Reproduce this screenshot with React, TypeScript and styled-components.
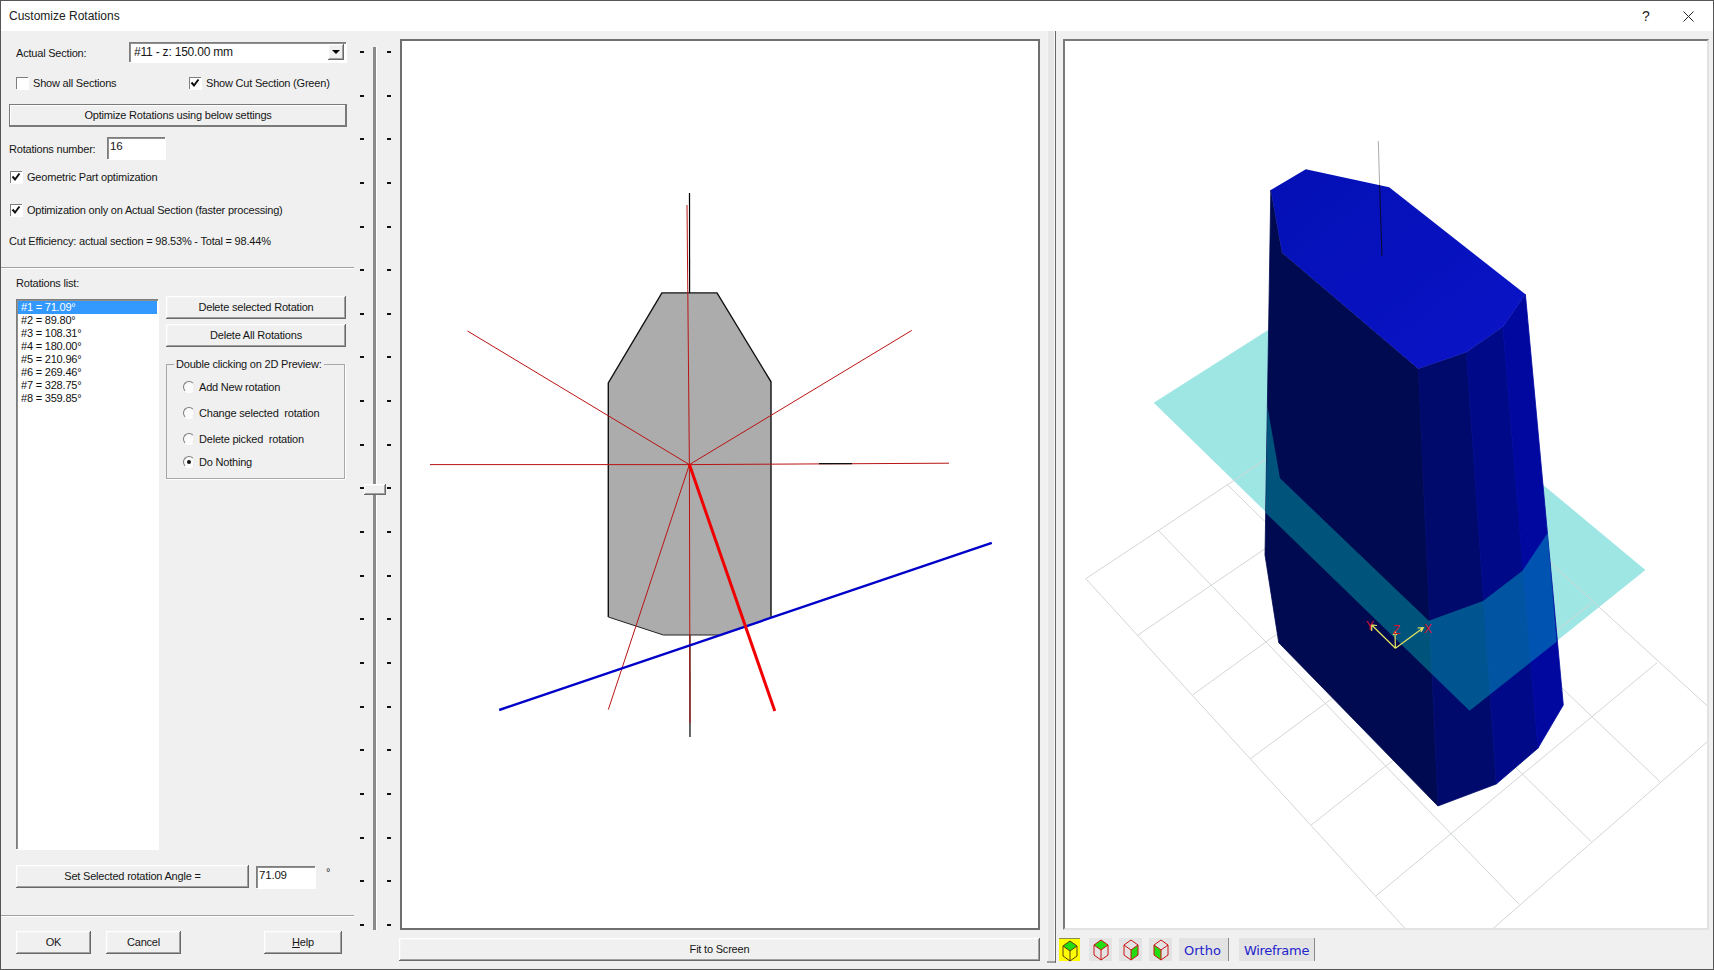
import React from "react";
import styled, { createGlobalStyle, css } from "styled-components";

const Global = createGlobalStyle`
  html, body { margin: 0; padding: 0; background: #f0f0f0; }
  #root { width: 1714px; height: 970px; overflow: hidden; }
`;

const raised = css`
  background: #f0f0f0;
  box-shadow: inset -1px -1px 0 #696969, inset 1px 1px 0 #ffffff, inset -2px -2px 0 #a0a0a0, inset 2px 2px 0 #f4f4f4;
`;
const sunken = css`
  background: #ffffff;
  box-shadow: inset 1px 1px 0 #7d7d7d, inset 2px 2px 0 #8f8f8f, 1px 1px 0 #ffffff;
`;

const Window = styled.div`
  width: 1714px;
  height: 970px;
  box-sizing: border-box;
  border: 1px solid #555555;
  display: flex;
  flex-direction: column;
  background: #f0f0f0;
  color: #161616;
  font-family: "Liberation Sans", Arial, sans-serif;
  font-size: 11px;
  letter-spacing: -0.2px;
`;
const TitleBar = styled.div`
  height: 30px;
  flex: none;
  background: #ffffff;
  display: flex;
  align-items: center;
  padding-left: 8px;
  font-size: 12px;
  letter-spacing: 0;
  color: #202020;
`;
const TitleText = styled.span`
  flex: 1;
`;
const HelpGlyph = styled.span`
  width: 14px;
  margin-right: 30px;
  text-align: center;
  font-size: 14px;
  color: #222;
`;
const CloseGlyph = styled.svg`
  width: 11px;
  height: 11px;
  margin-right: 19px;
`;
const Body = styled.div`
  flex: 1;
  display: flex;
  min-height: 0;
`;
const LeftPanel = styled.div`
  width: 354px;
  flex: none;
  display: flex;
  flex-direction: column;
`;
const Row = styled.div<{ $top: number; $left?: number; $h?: number }>`
  display: flex;
  align-items: center;
  flex: none;
  margin-top: ${(p) => p.$top}px;
  margin-left: ${(p) => p.$left ?? 0}px;
  height: ${(p) => (p.$h ? `${p.$h}px` : "auto")};
`;
const FieldLabel = styled.span<{ $w: number }>`
  width: ${(p) => p.$w}px;
  flex: none;
  white-space: nowrap;
  padding-top: 2px;
`;
const Plain = styled.span`
  white-space: nowrap;
`;
const Combo = styled.div`
  ${sunken};
  width: 217px;
  height: 20px;
  box-sizing: border-box;
  padding-left: 5px;
  display: flex;
  align-items: center;
  justify-content: space-between;
  font-size: 12px;
`;
const ComboButton = styled.div`
  ${raised};
  width: 16px;
  height: 16px;
  margin-right: 2px;
  display: flex;
  align-items: center;
  justify-content: center;
`;
const ComboArrow = styled.div`
  width: 0;
  height: 0;
  border-left: 4px solid transparent;
  border-right: 4px solid transparent;
  border-top: 4px solid #000;
`;
const CheckWrap = styled.div<{ $w?: number }>`
  display: flex;
  align-items: center;
  gap: 5px;
  height: 14px;
  flex: none;
  width: ${(p) => (p.$w ? `${p.$w}px` : "auto")};
  white-space: nowrap;
`;
const Box = styled.div`
  ${sunken};
  box-shadow: inset 1px 1px 0 #7d7d7d, 1px 1px 0 #ffffff;
  width: 12px;
  height: 12px;
  flex: none;
  display: flex;
  align-items: center;
  justify-content: center;
`;
const Button = styled.div<{ $w: number; $primary?: boolean; $ml?: number }>`
  ${raised};
  ${(p) =>
    p.$primary &&
    css`
      box-shadow: inset 0 0 0 1px #7a7a7a, inset -2px -2px 0 #7a7a7a, inset 2px 2px 0 #ffffff;
    `}
  width: ${(p) => p.$w}px;
  margin-left: ${(p) => p.$ml ?? 0}px;
  height: 23px;
  flex: none;
  box-sizing: border-box;
  display: flex;
  align-items: center;
  justify-content: center;
  white-space: nowrap;
  padding-bottom: 1px;
`;
const Underlined = styled.span`
  text-decoration: underline;
`;
const NumberBox = styled.div<{ $w: number; $ml?: number }>`
  ${sunken};
  width: ${(p) => p.$w}px;
  margin-left: ${(p) => p.$ml ?? 0}px;
  height: 22px;
  flex: none;
  box-sizing: border-box;
  padding: 3px 0 0 3px;
  font-size: 11.5px;
  line-height: 13px;
`;
const Separator = styled.div<{ $top: number }>`
  height: 1px;
  flex: none;
  margin: ${(p) => p.$top}px 1px 0 0;
  background: #a0a0a0;
  border-bottom: 1px solid #ffffff;
`;
const MainRow = styled.div`
  display: flex;
  flex: none;
  margin: 6px 0 0 15px;
  height: 553px;
`;
const ListBox = styled.div`
  ${sunken};
  width: 142px;
  height: 550px;
  margin-top: 3px;
  box-sizing: border-box;
  padding: 2px 1px 0 2px;
  flex: none;
`;
const ListRow = styled.div<{ $selected?: boolean }>`
  height: 13px;
  line-height: 13px;
  padding-left: 3px;
  font-size: 11px;
  background: ${(p) => (p.$selected ? "#3399ff" : "transparent")};
  color: ${(p) => (p.$selected ? "#ffffff" : "#111111")};
`;
const SideColumn = styled.div`
  margin-left: 8px;
  width: 180px;
  display: flex;
  flex-direction: column;
  gap: 5px;
`;
const Group = styled.fieldset`
  margin: 12px 0 0;
  padding: 0 0 0 16px;
  width: 179px;
  height: 115px;
  box-sizing: border-box;
  border: 1px solid #a8a8a8;
  box-shadow: 1px 1px 0 #fff;
  position: relative;
`;
const GroupTitle = styled.div`
  position: absolute;
  top: -7px;
  left: 7px;
  padding: 0 2px;
  background: #f0f0f0;
  white-space: nowrap;
`;
const RadioRow = styled.div<{ $top: number }>`
  display: flex;
  align-items: center;
  gap: 4px;
  height: 14px;
  margin-top: ${(p) => p.$top}px;
  white-space: nowrap;
`;
const Radio = styled.div<{ $on?: boolean }>`
  width: 12px;
  height: 12px;
  flex: none;
  border-radius: 50%;
  background: #fbfbfb;
  box-sizing: border-box;
  border: 1px solid;
  border-color: #7a7a7a #e6e6e6 #ffffff #7a7a7a;
  display: flex;
  align-items: center;
  justify-content: center;
  &::after {
    content: "";
    display: ${(p) => (p.$on ? "block" : "none")};
    width: 4px;
    height: 4px;
    border-radius: 50%;
    background: #111;
  }
`;
const Degree = styled.span`
  margin: -9px 0 0 11px;
  font-size: 11px;
`;
const SliderColumn = styled.div`
  width: 44px;
  flex: none;
  position: relative;
  padding: 20px 0 0 5px;
  box-sizing: border-box;
`;
const Track = styled.div`
  position: absolute;
  left: 18px;
  top: 16px;
  width: 3px;
  height: 883px;
  background: #8a8a8a;
  box-shadow: 1px 0 0 #ffffff;
`;
const Thumb = styled.div`
  ${raised};
  position: absolute;
  left: 9px;
  top: 453px;
  width: 22px;
  height: 11px;
`;
const Ticks = styled.div`
  width: 31px;
  height: 875px;
  display: flex;
  flex-direction: column;
  justify-content: space-between;
`;
const Tick = styled.div`
  display: flex;
  justify-content: space-between;
`;
const Dash = styled.span`
  width: 4px;
  height: 2px;
  background: #111;
`;
const PreviewColumn = styled.div`
  width: 641px;
  flex: none;
  padding-top: 8px;
  display: flex;
  flex-direction: column;
`;
const Canvas2D = styled.div`
  margin-left: 1px;
  width: 640px;
  height: 891px;
  box-sizing: border-box;
  border: 2px solid #6f6f6f;
  background: #ffffff;
  flex: none;
`;
const Drawing = styled.svg`
  display: block;
  width: 100%;
  height: 100%;
`;
const Splitter = styled.div`
  margin-left: 7px;
  width: 9px;
  height: 932px;
  flex: none;
  box-sizing: border-box;
  background: #e6e6e6;
  border-right: 1px solid #696969;
  box-shadow: inset 0 -2px 0 #a0a0a0, inset -1px 0 0 #f4f4f4, inset 1px 0 0 #f4f4f4;
`;
const View3DColumn = styled.div`
  flex: 1;
  padding-top: 8px;
  display: flex;
  flex-direction: column;
`;
const Canvas3D = styled.div`
  margin-left: 7px;
  width: 646px;
  height: 891px;
  box-sizing: border-box;
  border-style: solid;
  border-width: 2px;
  border-color: #7a7a7a #e2e2e2 #e2e2e2 #7a7a7a;
  background: #ffffff;
  flex: none;
`;
const Toolbar = styled.div`
  margin: 8px 0 0 3px;
  height: 23px;
  display: flex;
  align-items: stretch;
`;
const ToolIcon = styled.div<{ $active?: boolean; $ml?: number }>`
  width: ${(p) => (p.$active ? 21 : 23)}px;
  margin-left: ${(p) => p.$ml ?? 0}px;
  background: ${(p) => (p.$active ? "#ffff00" : "#e3e3e3")};
  ${(p) => p.$active && "border-top: 1px solid #8a8a50; box-sizing: border-box;"}
  display: flex;
  justify-content: center;
`;
const ToolText = styled.div<{ $w: number; $ml: number; $tight?: boolean }>`
  width: ${(p) => p.$w}px;
  margin-left: ${(p) => p.$ml}px;
  box-sizing: border-box;
  background: #e3e3e3;
  border-right: 1px solid #8a8a8a;
  color: #2424cc;
  font-family: "DejaVu Sans", sans-serif;
  font-size: 13px;
  letter-spacing: ${(p) => (p.$tight ? "-0.3px" : "0")};
  display: flex;
  align-items: center;
  padding: 2px 0 0 5px;
`;

const Check = ({ on }: { on?: boolean }) => (
  <Box>
    {on && (
      <svg width="10" height="10" viewBox="0 0 10 10">
        <path d="M1.5 4.5 L4 7.5 L8.5 1.5" fill="none" stroke="#111" strokeWidth="2" />
      </svg>
    )}
  </Box>
);

const rotations = ["#1 = 71.09°", "#2 = 89.80°", "#3 = 108.31°", "#4 = 180.00°", "#5 = 210.96°", "#6 = 269.46°", "#7 = 328.75°", "#8 = 359.85°"];

const CX = 689.4;
const CY = 464.6;
const thinRays: [number, number][] = [
  [467.5, 331],
  [911.8, 330.4],
  [430, 464.6],
  [949, 463.2],
  [608.3, 709.6],
  [690, 723],
  [687, 205],
];

const Section2D = () => (
  <Drawing viewBox="402 41 636 887" preserveAspectRatio="none">
    <line x1="689.5" y1="193" x2="690" y2="737" stroke="#000" strokeWidth="1.2" />
    <polygon
      points="661.9,292.9 717,292.9 771,381.8 771,617.5 718.5,635 663.4,635 608.3,617 608.3,382.9"
      fill="#acacac"
    />
    <path d="M608.3 617 L608.3 382.9 L661.9 292.9 L717 292.9 L771 381.8 L771 617.5" fill="none" stroke="#111" strokeWidth="1.4" />
    <path d="M608.3 617 L663.4 635 L718.5 635" fill="none" stroke="#222" strokeWidth="1" />
    {thinRays.map(([x, y]) => (
      <line key={`${x}-${y}`} x1={CX} y1={CY} x2={x} y2={y} stroke="#b81414" strokeWidth="1" />
    ))}
    <line x1="819" y1="463.6" x2="852" y2="463.6" stroke="#111" strokeWidth="1.3" />
    <line x1="499.2" y1="710" x2="991.8" y2="542.9" stroke="#0000c8" strokeWidth="2.4" />
    <line x1={CX} y1={CY} x2="774.8" y2="711" stroke="#f00000" strokeWidth="3" />
  </Drawing>
);

// maps a point read in grid space to page pixels
const gx = (x: number) => 1060 + x / 2.4;
const gy = (y: number) => 500 + y / 3;
const gridLines: number[][] = [
  [62, 236, 600, -210],
  [187, 405, 700, -30],
  [318, 585, 700, 240],
  [458, 775, 800, 460],
  [603, 975, 1275, 310],
  [758, 1188, 1433, 488],
  [1037, 1288, 1560, 718],
  [62, 236, 830, 1288],
  [235, 90, 1102, 1213],
  [400, -48, 1275, 1025],
  [900, 200, 1440, 845],
  [1100, 100, 1560, 625],
];

const faces: [string, string][] = [
  ["1270.8,190 1282,252.7 1418.3,368.7 1437.9,806 1278.75,642.7 1265,555", "#000a50"],
  ["1418.3,368.7 1466.3,352.3 1496.25,784 1437.9,806", "#000a6c"],
  ["1466.3,352.3 1502.9,326.7 1537.9,748.3 1496.25,784", "#000a88"],
  ["1502.9,326.7 1525.4,294.3 1563.3,705 1537.9,748.3", "#0008a0"],
];

const Solid3D = () => (
  <Drawing viewBox="1065 41 642 887" preserveAspectRatio="none">
    <defs>
      <linearGradient id="topFace" x1="0" y1="0" x2="1" y2="1">
        <stop offset="0" stopColor="#0310b4" />
        <stop offset="1" stopColor="#0b14c8" />
      </linearGradient>
    </defs>
    <polygon points="1153.75,402.7 1318.6,298 1645.4,570 1469.6,710.7" fill="#9ee6e4" />
    {gridLines.map(([a, b, c, d]) => (
      <line key={`${a}-${b}-${c}`} x1={gx(a)} y1={gy(b)} x2={gx(c)} y2={gy(d)} stroke="#d2d6d6" strokeWidth="1" />
    ))}
    {faces.map(([points, fill]) => (
      <polygon key={fill} points={points} fill={fill} stroke={fill} strokeWidth="0.8" />
    ))}
    <polygon points="1270.8,190 1305.8,169.3 1389.2,187.3 1525.4,294.3 1502.9,326.7 1466.3,352.3 1418.3,368.7 1282,252.7" fill="url(#topFace)" />
    <polygon
      points="1267.5,406.7 1280,478.3 1428.75,620.7 1483,601 1522.5,570.7 1547.5,533.3 1556.7,641.7 1469.6,710.7 1265.8,513"
      fill="rgba(0,230,210,0.34)"
    />
    <line x1="1378.3" y1="141" x2="1379.6" y2="185" stroke="#aaaaaa" strokeWidth="1" />
    <line x1="1379.6" y1="185" x2="1382" y2="256" stroke="#0a0a30" strokeWidth="1" />
    <g stroke="#e6e660" strokeWidth="1.2" fill="none">
      <path d="M1395.4 648.3 L1371.7 625 M1371.7 631 L1371.7 625 L1377 625.5" />
      <path d="M1395.4 648.3 L1395 631.7 M1393 635 L1395 631.7 L1397 635" />
      <path d="M1395.4 648.3 L1423.3 627.7 M1417.5 628 L1423.3 627.7 L1421 632" />
    </g>
    <g fill="#d81030" fontFamily="'Liberation Sans', sans-serif" fontSize="12">
      <text x="1366" y="630">Y</text>
      <text x="1393" y="634">Z</text>
      <text x="1424" y="633">X</text>
    </g>
  </Drawing>
);

const Cube = ({ face, stroke }: { face: "top" | "right" | "left"; stroke: string }) => {
  const polys = {
    top: "8,1 15,6 8,11 1,6",
    right: "15,6 15,16 8,21 8,11",
    left: "1,6 1,16 8,21 8,11",
  };
  return (
    <svg width="16" height="23" viewBox="0 -1 16 23">
      <polygon points={polys[face]} fill="#22dd11" />
      <path d="M8 1 L15 6 L15 16 L8 21 L1 16 L1 6 Z M1 6 L8 11 L15 6 M8 11 L8 21" fill="none" stroke={stroke} strokeWidth="1" />
    </svg>
  );
};

export default function App() {
  return (
    <>
      <Global />
      <Window>
        <TitleBar>
          <TitleText>Customize Rotations</TitleText>
          <HelpGlyph>?</HelpGlyph>
          <CloseGlyph viewBox="0 0 11 11">
            <path d="M0.5 0.5 L10.5 10.5 M10.5 0.5 L0.5 10.5" stroke="#222" strokeWidth="1" />
          </CloseGlyph>
        </TitleBar>
        <Body>
          <LeftPanel>
            <Row $top={11} $left={15} $h={20}>
              <FieldLabel $w={113}>Actual Section:</FieldLabel>
              <Combo>
                #11 - z: 150.00 mm
                <ComboButton>
                  <ComboArrow />
                </ComboButton>
              </Combo>
            </Row>
            <Row $top={14} $left={15} $h={14}>
              <CheckWrap $w={173}>
                <Check />
                Show all Sections
              </CheckWrap>
              <CheckWrap>
                <Check on />
                Show Cut Section (Green)
              </CheckWrap>
            </Row>
            <Row $top={14} $left={8}>
              <Button $w={338} $primary>
                Optimize Rotations using below settings
              </Button>
            </Row>
            <Row $top={10} $left={8} $h={22}>
              <FieldLabel $w={98}>Rotations number:</FieldLabel>
              <NumberBox $w={58}>16</NumberBox>
            </Row>
            <Row $top={11} $left={9} $h={14}>
              <CheckWrap>
                <Check on />
                Geometric Part optimization
              </CheckWrap>
            </Row>
            <Row $top={19} $left={9} $h={14}>
              <CheckWrap>
                <Check on />
                Optimization only on Actual Section (faster processing)
              </CheckWrap>
            </Row>
            <Row $top={17} $left={8} $h={14}>
              <Plain>Cut Efficiency: actual section = 98.53% - Total = 98.44%</Plain>
            </Row>
            <Separator $top={19} />
            <Row $top={7} $left={15} $h={14}>
              <Plain>Rotations list:</Plain>
            </Row>
            <MainRow>
              <ListBox>
                {rotations.map((r, i) => (
                  <ListRow key={r} $selected={i === 0}>
                    {r}
                  </ListRow>
                ))}
              </ListBox>
              <SideColumn>
                <Button $w={180}>Delete selected Rotation</Button>
                <Button $w={180}>Delete All Rotations</Button>
                <Group>
                  <GroupTitle>Double clicking on 2D Preview:</GroupTitle>
                  <RadioRow $top={15}>
                    <Radio />
                    Add New rotation
                  </RadioRow>
                  <RadioRow $top={12}>
                    <Radio />
                    Change selected&nbsp; rotation
                  </RadioRow>
                  <RadioRow $top={12}>
                    <Radio />
                    Delete picked&nbsp; rotation
                  </RadioRow>
                  <RadioRow $top={9}>
                    <Radio $on />
                    Do Nothing
                  </RadioRow>
                </Group>
              </SideColumn>
            </MainRow>
            <Row $top={16} $left={15} $h={23}>
              <Button $w={233}>Set Selected rotation Angle =</Button>
              <NumberBox $w={59} $ml={7}>
                71.09
              </NumberBox>
              <Degree>°</Degree>
            </Row>
            <Separator $top={27} />
            <Row $top={14} $left={15} $h={23}>
              <Button $w={75}>OK</Button>
              <Button $w={75} $ml={15}>
                Cancel
              </Button>
              <Button $w={78} $ml={83}>
                <Underlined>H</Underlined>elp
              </Button>
            </Row>
          </LeftPanel>
          <SliderColumn>
            <Track />
            <Ticks>
              {Array.from({ length: 21 }, (_, i) => (
                <Tick key={i}>
                  <Dash />
                  <Dash />
                </Tick>
              ))}
            </Ticks>
            <Thumb />
          </SliderColumn>
          <PreviewColumn>
            <Canvas2D>
              <Section2D />
            </Canvas2D>
            <Row $top={8}>
              <Button $w={641}>Fit to Screen</Button>
            </Row>
          </PreviewColumn>
          <Splitter />
          <View3DColumn>
            <Canvas3D>
              <Solid3D />
            </Canvas3D>
            <Toolbar>
              <ToolIcon $active>
                <Cube face="top" stroke="#5a3a10" />
              </ToolIcon>
              <ToolIcon $ml={9}>
                <Cube face="top" stroke="#cc1010" />
              </ToolIcon>
              <ToolIcon $ml={7}>
                <Cube face="right" stroke="#cc1010" />
              </ToolIcon>
              <ToolIcon $ml={7}>
                <Cube face="left" stroke="#cc1010" />
              </ToolIcon>
              <ToolText $w={50} $ml={7}>
                Ortho
              </ToolText>
              <ToolText $w={76} $ml={10} $tight>
                Wireframe
              </ToolText>
            </Toolbar>
          </View3DColumn>
        </Body>
      </Window>
    </>
  );
}
